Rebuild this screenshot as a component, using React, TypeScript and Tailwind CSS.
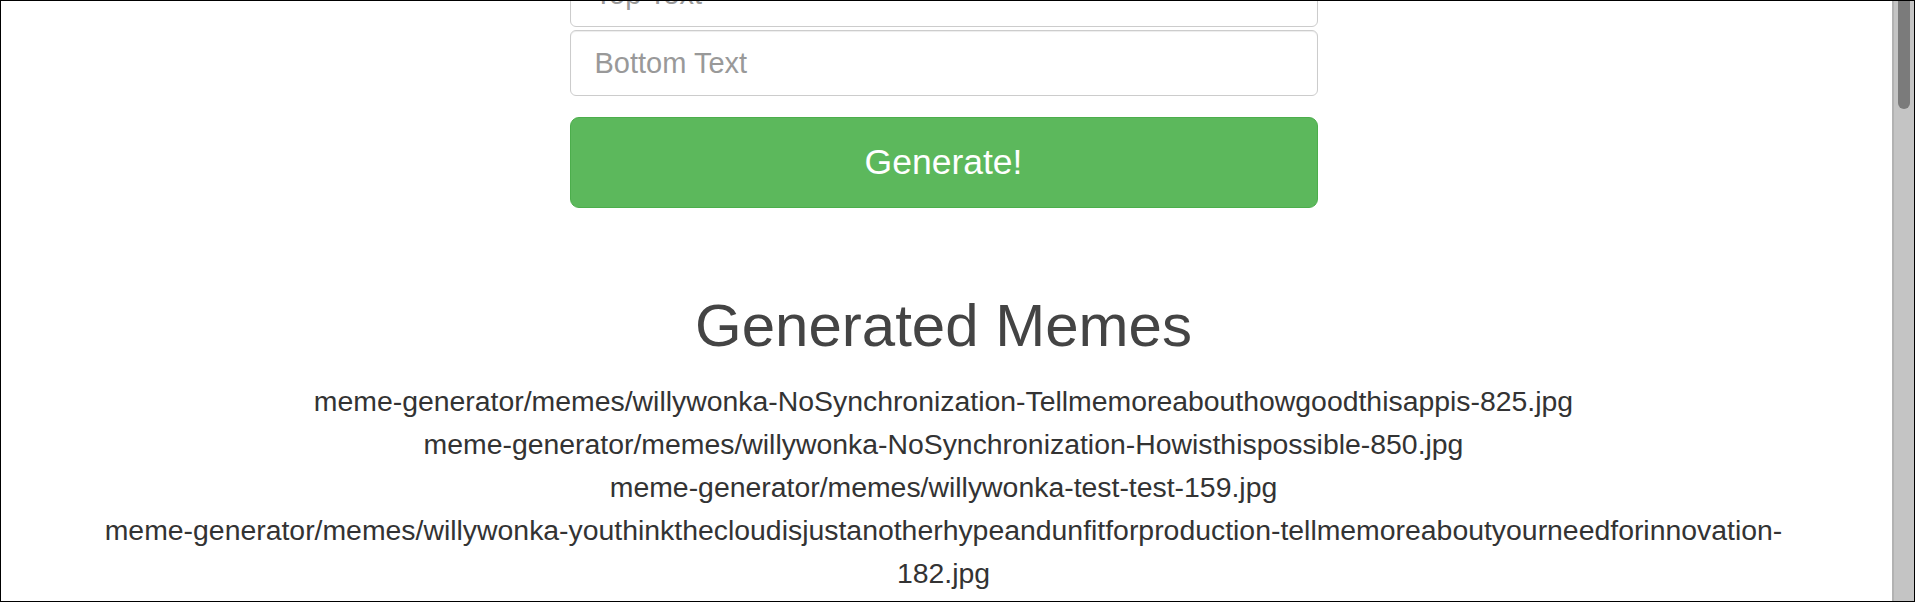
import React from "react";

const memes = [
  "meme-generator/memes/willywonka-NoSynchronization-Tellmemoreabouthowgoodthisappis-825.jpg",
  "meme-generator/memes/willywonka-NoSynchronization-Howisthispossible-850.jpg",
  "meme-generator/memes/willywonka-test-test-159.jpg",
];

export default function App() {
  return (
    <div className="w-[1915px] h-[602px] border border-black flex overflow-hidden bg-white font-['Liberation_Sans',Arial,sans-serif]">
      {/* === page (scrolled) === */}
      <div className="flex-1 overflow-hidden pr-[6px]">
        <div className="-mt-[40px]">
          {/* === FORM === */}
          <form className="w-[748px] mx-auto flex flex-col">
            <input
              type="text"
              placeholder="Top Text"
              className="h-[66px] px-[24px] text-[29px] border border-[#ccc] rounded-[6px] shadow-[inset_0_1px_1px_rgba(0,0,0,0.075)] placeholder:text-[#999] outline-none"
            />
            <input
              type="text"
              placeholder="Bottom Text"
              className="mt-[3px] h-[66px] px-[24px] text-[29px] border border-[#ccc] rounded-[6px] shadow-[inset_0_1px_1px_rgba(0,0,0,0.075)] placeholder:text-[#999] outline-none"
            />
            <button
              type="button"
              className="mt-[21px] h-[91px] bg-[#5cb85c] border border-[#4cae4c] rounded-[9px] text-white text-[35.5px]"
            >
              Generate!
            </button>
          </form>

          {/* === Generated memes === */}
          <h1 className="mt-[85px] text-center text-[60px] leading-[66px] text-[#444]">
            Generated Memes
          </h1>
          <div className="mt-[21px] w-[1720px] mx-auto text-center text-[28.4px] leading-[43px] text-[#333]">
            {memes.map((m) => (
              <div key={m}>{m}</div>
            ))}
            <div>
              meme-generator/memes/willywonka-youthinkthecloudisjustanotherhypeandunfitforproduction-tellmemoreaboutyourneedforinnovation-
              <wbr />
              182.jpg
            </div>
          </div>
        </div>
      </div>

      {/* === scrollbar === */}
      <div className="w-[22px] shrink-0 bg-[#c4c4c4] border-l-2 border-[#b2b2b2] flex justify-center">
        <div className="w-[12px] h-[108px] bg-[#7b7b7b] rounded-b-full" />
      </div>
    </div>
  );
}
